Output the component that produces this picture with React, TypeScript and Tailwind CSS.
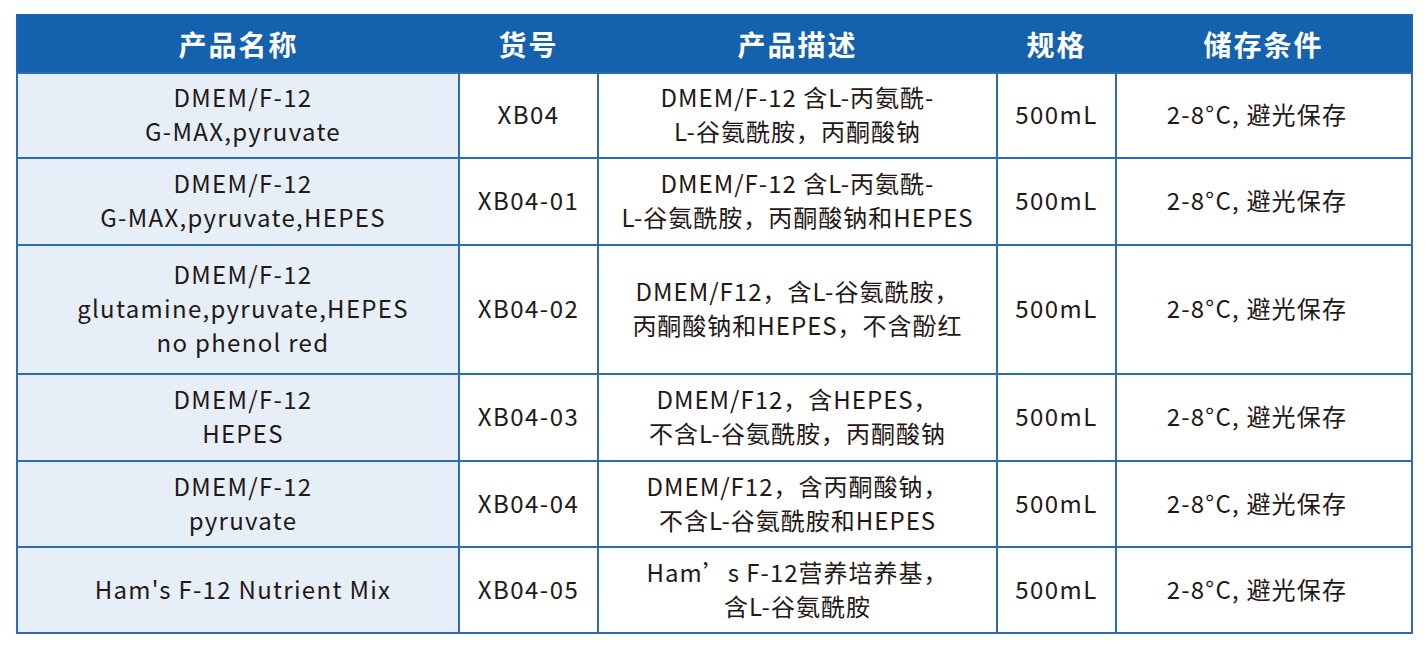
const rows = [
  {
    name: ["DMEM/F-12", "G-MAX,pyruvate"],
    code: "XB04",
    desc: ["DMEM/F-12 含L-丙氨酰-", "L-谷氨酰胺，丙酮酸钠"],
    h: "h-[85px]",
  },
  {
    name: ["DMEM/F-12", "G-MAX,pyruvate,HEPES"],
    code: "XB04-01",
    desc: ["DMEM/F-12 含L-丙氨酰-", "L-谷氨酰胺，丙酮酸钠和HEPES"],
    h: "h-[87px]",
  },
  {
    name: ["DMEM/F-12", "glutamine,pyruvate,HEPES", "no phenol red"],
    code: "XB04-02",
    desc: ["DMEM/F12，含L-谷氨酰胺，", "丙酮酸钠和HEPES，不含酚红"],
    h: "h-[129px]",
  },
  {
    name: ["DMEM/F-12", "HEPES"],
    code: "XB04-03",
    desc: ["DMEM/F12，含HEPES，", "不含L-谷氨酰胺，丙酮酸钠"],
    h: "h-[87px]",
  },
  {
    name: ["DMEM/F-12", "pyruvate"],
    code: "XB04-04",
    desc: ["DMEM/F12，含丙酮酸钠，", "不含L-谷氨酰胺和HEPES"],
    h: "h-[86px]",
  },
  {
    name: ["Ham's F-12 Nutrient Mix"],
    code: "XB04-05",
    desc: ["Ham’s F-12营养培养基，", "含L-谷氨酰胺"],
    h: "h-[86px]",
  },
];

const headers = ["产品名称", "货号", "产品描述", "规格", "储存条件"];

export default function App() {
  return (
    <div className="w-[1426px] h-[652px] bg-white pt-[14px] pl-[16px] font-['Noto_Sans_CJK_SC','Noto_Sans',sans-serif] text-[#231815]">
      <table className="w-[1395px] table-fixed border-collapse border-2 border-[#1e64b0]">
        <colgroup>
          <col className="w-[442px]" />
          <col className="w-[139px]" />
          <col className="w-[399px]" />
          <col className="w-[119px]" />
          <col className="w-[296px]" />
        </colgroup>
        <thead>
          <tr className="h-[58px] bg-[#1461ae]">
            {headers.map((t) => (
              <th
                key={t}
                className="text-white text-[28px] font-bold tracking-[2px] text-center align-middle"
              >
                {t}
              </th>
            ))}
          </tr>
        </thead>
        <tbody>
          {rows.map((r) => (
            <tr key={r.code} className={r.h}>
              <td className="bg-[#e6eff8] border-2 border-[#2d6bb4] pl-[10px] pb-[3px] text-center align-middle text-[24px] leading-[34px] tracking-[1.3px]">
                {r.name.map((l) => (
                  <div key={l}>{l}</div>
                ))}
              </td>
              <td className="border-2 border-[#2d6bb4] pb-[3px] text-center align-middle text-[24px] tracking-[1.5px]">
                {r.code}
              </td>
              <td className="border-2 border-[#2d6bb4] pb-[3px] text-center align-middle text-[24px] leading-[34px] tracking-[1px]">
                {r.desc.map((l) => (
                  <div key={l}>{l}</div>
                ))}
              </td>
              <td className="border-2 border-[#2d6bb4] pb-[3px] text-center align-middle text-[24px] tracking-[1.5px]">
                500mL
              </td>
              <td className="border-2 border-[#2d6bb4] pb-[3px] pr-[14px] text-center align-middle text-[24px] tracking-[1.2px]">
                2-8°C, 避光保存
              </td>
            </tr>
          ))}
        </tbody>
      </table>
    </div>
  );
}
